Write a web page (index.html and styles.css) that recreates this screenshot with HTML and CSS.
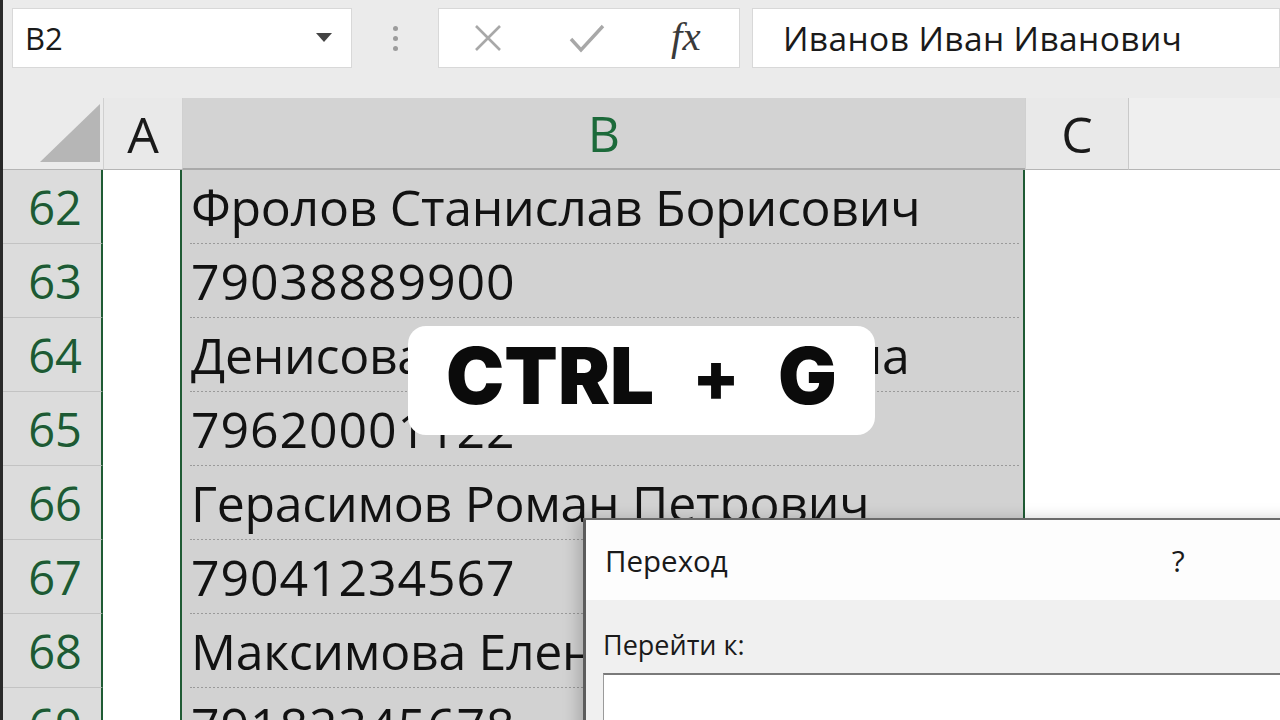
FILE: index.html
```html
<!DOCTYPE html>
<html lang="ru">
<head>
<meta charset="utf-8">
<title>Excel — Переход</title>
<link rel="stylesheet" href="styles.css">
</head>
<body>
<div class="app">
  <div class="toolbar">
    <div class="namebox">
      <span class="name">B2</span>
      <svg class="caret" width="16" height="10" viewBox="0 0 16 10"><path d="M0 0H16L8 9Z" fill="#444"/></svg>
    </div>
    <div class="dots"><i></i><i></i><i></i></div>
    <div class="fbtns">
      <svg width="30" height="30" viewBox="0 0 30 30"><path d="M3 3L27 27M27 3L3 27" stroke="#a8a8a8" stroke-width="2.6" fill="none"/></svg>
      <svg width="36" height="30" viewBox="0 0 36 30"><path d="M2 16L12 27L34 3" stroke="#a8a8a8" stroke-width="3.4" fill="none"/></svg>
      <span class="fx">fx</span>
    </div>
    <div class="fcontent">Иванов Иван Иванович</div>
  </div>

  <div class="sheet">
    <div class="corner"><span class="tri"></span></div>
    <div class="colh">A</div>
    <div class="colh sel">B</div>
    <div class="colh">C</div>
    <div class="colh last"></div>

    <div class="rowh">62</div><div class="ca"></div><div class="cb">Фролов Станислав Борисович</div><div class="cc"></div><div class="cd"></div>
    <div class="rowh">63</div><div class="ca"></div><div class="cb num">79038889900</div><div class="cc"></div><div class="cd"></div>
    <div class="rowh">64</div><div class="ca"></div><div class="cb">Денисова Светлана Игоревна</div><div class="cc"></div><div class="cd"></div>
    <div class="rowh">65</div><div class="ca"></div><div class="cb num">79620001122</div><div class="cc"></div><div class="cd"></div>
    <div class="rowh">66</div><div class="ca"></div><div class="cb">Герасимов Роман Петрович</div><div class="cc"></div><div class="cd"></div>
    <div class="rowh">67</div><div class="ca"></div><div class="cb num">79041234567</div><div class="cc"></div><div class="cd"></div>
    <div class="rowh">68</div><div class="ca"></div><div class="cb">Максимова Елена Андреевна</div><div class="cc"></div><div class="cd"></div>
    <div class="rowh">69</div><div class="ca"></div><div class="cb num">79182345678</div><div class="cc"></div><div class="cd"></div>
  </div>

  <div class="hotkey"><span>CTRL</span><span class="plus">+</span><span>G</span></div>

  <div class="dialog">
    <div class="dtitle"><span>Переход</span><span class="help">?</span></div>
    <div class="dbody">
      <div class="dlabel">Перейти к:</div>
      <div class="dinput"></div>
    </div>
  </div>
</div>
</body>
</html>
```

FILE: styles.css
```css
* { box-sizing: border-box; margin: 0; padding: 0; }
html, body { width: 1280px; height: 720px; overflow: hidden; }
body { background: #ebebeb; font-family: "Open Sans", "Noto Sans", sans-serif; color: #111; }

.app {
  position: relative;
  width: 1280px;
  height: 720px;
  overflow: hidden;
  border-left: 3px solid #2a2a2a;
}

/* formula bar */
.toolbar {
  display: flex;
  align-items: stretch;
  height: 68px;
  padding: 8px 0 0 9px;
}
.namebox {
  width: 340px;
  background: #fff;
  border: 1px solid #d8d8d8;
  display: flex;
  align-items: center;
  justify-content: space-between;
  padding: 0 19px 0 12px;
}
.name { font-size: 31px; color: #1a1a1a; }
.dots {
  width: 86px;
  display: flex;
  flex-direction: column;
  align-items: center;
  justify-content: center;
  gap: 5px;
}
.dots i { display: block; width: 5px; height: 5px; border-radius: 50%; background: #9c9c9c; }
.fbtns {
  width: 302px;
  background: #fff;
  border: 1px solid #d8d8d8;
  display: flex;
  align-items: center;
  padding: 0 0 0 34px;
}
.fbtns svg:nth-child(1) { margin-right: 66px; }
.fbtns svg:nth-child(2) { margin-right: 66px; }
.fx {
  font-family: "Liberation Serif", "DejaVu Serif", serif;
  font-style: italic;
  font-size: 41px;
  color: #3a3a3a;
  letter-spacing: 0;
  padding-bottom: 4px;
}
.fcontent {
  flex: 1;
  margin-left: 12px;
  background: #fff;
  border: 1px solid #d8d8d8;
  display: flex;
  align-items: center;
  padding-left: 30px;
  font-size: 33.5px;
  color: #1a1a1a;
  letter-spacing: 0.4px;
}

/* sheet */
.sheet {
  margin-top: 30px;
  display: grid;
  grid-template-columns: 100px 79px 843px 103px 1fr;
  grid-template-rows: 72px repeat(8, 74px);
  font-size: 50px;
}
.corner {
  position: relative;
  background: #ebebeb;
  border-bottom: 1px solid #b5b5b5;
}
.tri {
  position: absolute;
  right: 3px;
  bottom: 7px;
  width: 0; height: 0;
  border-left: 60px solid transparent;
  border-bottom: 58px solid #b6b6b6;
}
.colh {
  background: #e9e9e9;
  border-bottom: 1px solid #b5b5b5;
  border-left: 1px solid #d0d0d0;
  display: flex;
  align-items: center;
  justify-content: center;
  color: #1a1a1a;
  font-size: 50px;
}
.colh.sel {
  background: #d3d3d3;
  color: #1c6a3a;
  border-bottom: 2px solid #a9a9a9;
}
.colh.last { background: #efefef; border-left: 1px solid #c9c9c9; }

.rowh {
  background: #dcdcdc;
  border-bottom: 1px solid #c3c3c3;
  border-right: 2px solid #1f5b34;
  color: #1d5a34;
  display: flex;
  align-items: center;
  justify-content: center;
  padding-left: 6px;
  font-size: 47px;
  text-shadow: 0 0 2px rgba(200, 255, 220, 0.6);
}
.ca { background: #fff; border-right: 2px solid #1f5b34; }
.cb {
  background: #d2d2d2;
  border-right: 2px solid #1f5b34;
  display: flex;
  align-items: center;
  padding-left: 9px;
  white-space: nowrap;
  overflow: hidden;
  position: relative;
  color: #121212;
  letter-spacing: -0.3px;
}
.cb.num { letter-spacing: 0.9px; }
.cb::after {
  content: "";
  position: absolute;
  left: 8px; right: 4px; bottom: -1px;
  border-bottom: 2px dotted #9a9a9a;
}
.cc, .cd { background: #fff; }

/* hotkey badge */
.hotkey {
  position: absolute;
  left: 405px;
  top: 326px;
  width: 467px;
  height: 109px;
  background: #fff;
  border-radius: 18px;
  display: flex;
  align-items: center;
  justify-content: center;
  gap: 38px;
  font-family: "Inter", "DejaVu Sans", sans-serif;
  font-weight: 900;
  font-size: 78px;
  color: #0b0b0b;
  letter-spacing: 0;
  padding-bottom: 10px;
}
.plus { font-weight: 800; font-size: 70px; }

/* dialog */
.dialog {
  position: absolute;
  left: 580px;
  top: 518px;
  width: 720px;
  height: 220px;
  background: #f0f0f0;
  border-left: 3px solid #5c5c5c;
  border-top: 2px solid #6a6a6a;
  box-shadow: -6px 0 14px rgba(0, 0, 0, 0.18);
  font-family: "Open Sans", "Noto Sans", sans-serif;
  color: #1a1a1a;
}
.dtitle {
  height: 80px;
  background: #fdfdfd;
  display: flex;
  align-items: center;
  padding-left: 19px;
  font-size: 29.5px;
}
.help { margin-left: 444px; font-size: 30px; }
.dbody { padding: 26px 0 0 17px; }
.dlabel { font-size: 27px; height: 47px; }
.dinput {
  height: 60px;
  background: #fff;
  border-top: 2px solid #7a7a7a;
  border-left: 1px solid #9a9a9a;
}
```
